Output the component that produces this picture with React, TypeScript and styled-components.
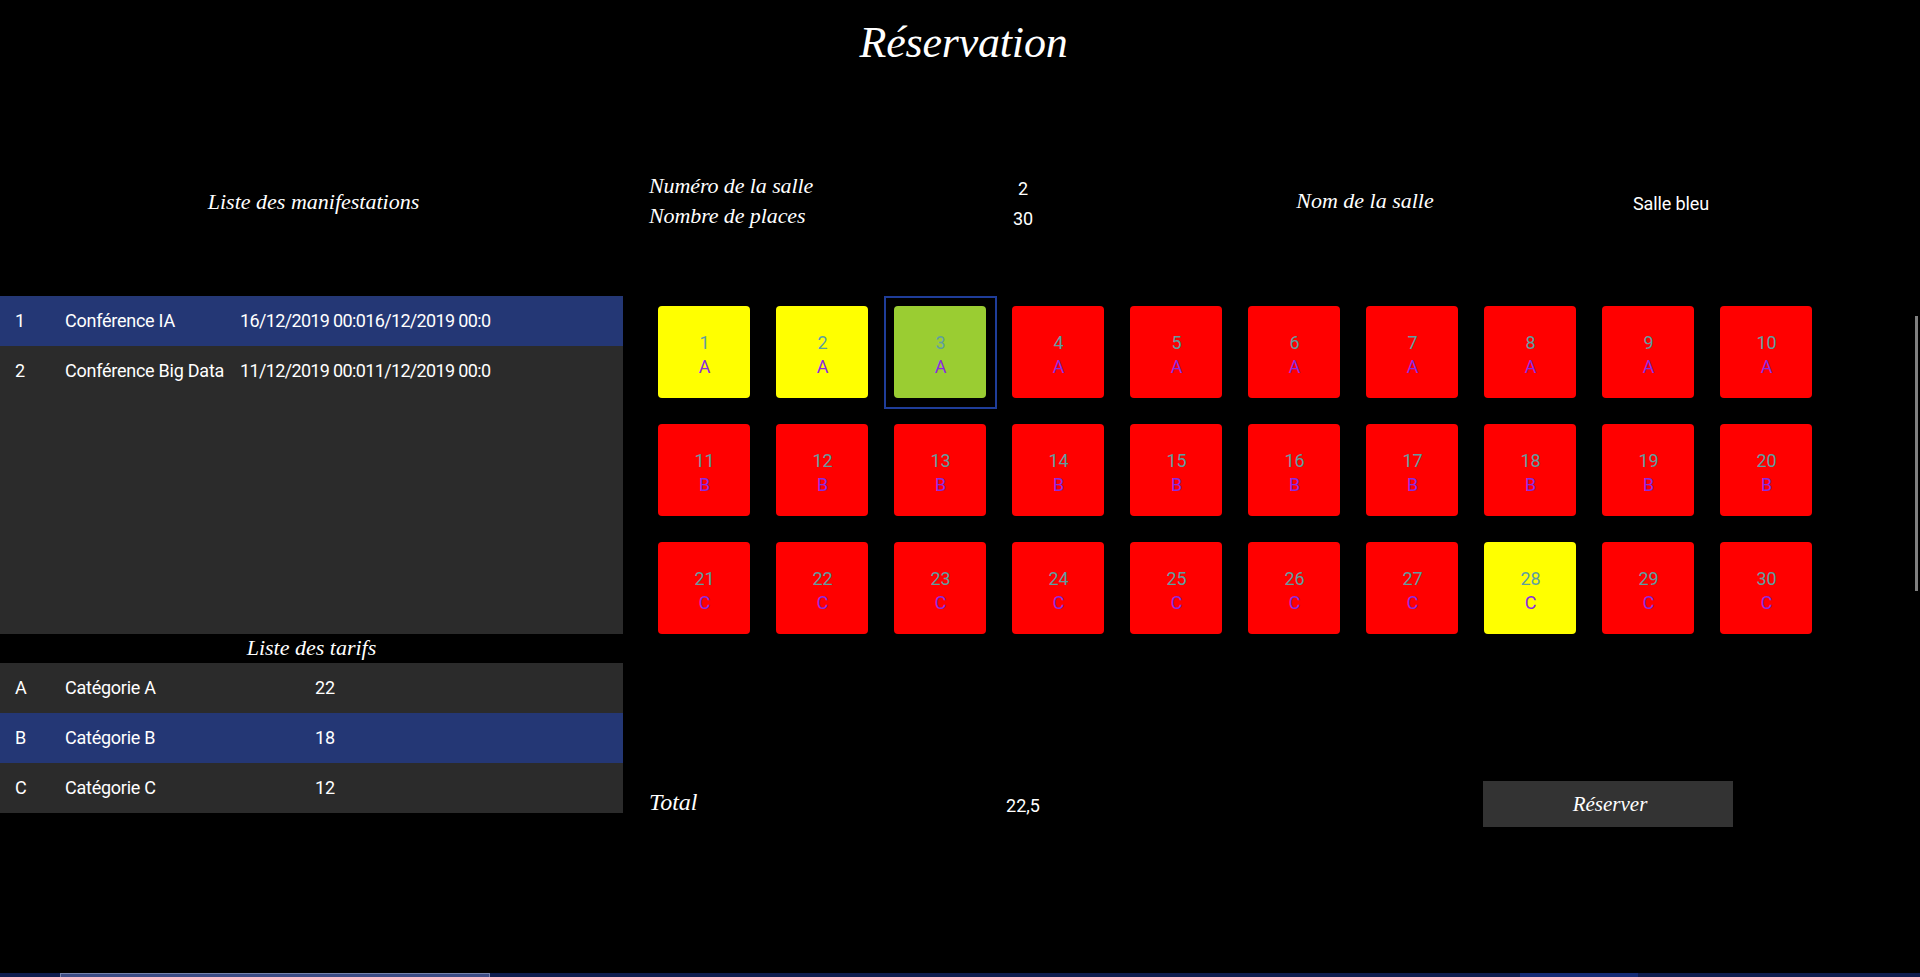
import { FC } from 'react';
import styled, { createGlobalStyle } from 'styled-components';

// ========== data ==========

const EVENTS = [
  { id: '1', name: 'Conférence IA', dates: '16/12/2019 00:016/12/2019 00:0', selected: true },
  { id: '2', name: 'Conférence Big Data', dates: '11/12/2019 00:011/12/2019 00:0', selected: false },
];

const PRICES = [
  { id: 'A', name: 'Catégorie A', price: '22', selected: false },
  { id: 'B', name: 'Catégorie B', price: '18', selected: true },
  { id: 'C', name: 'Catégorie C', price: '12', selected: false },
];

type SeatState = 'free' | 'taken' | 'current';

const seatState = (n: number): SeatState => {
  if (n === 3) return 'current';
  if (n === 1 || n === 2 || n === 28) return 'free';
  return 'taken';
};

const SEATS = Array.from({ length: 30 }, (_, i) => ({
  number: i + 1,
  category: i < 10 ? 'A' : i < 20 ? 'B' : 'C',
  state: seatState(i + 1),
}));

const SEAT_COLORS: Record<SeatState, string> = {
  free: '#ffff00',
  taken: '#ff0000',
  current: '#9acd32',
};

// ========== component ==========

const App: FC = () => (
  <>
    <GlobalStyle />
    <Page>
      <Title>Réservation</Title>
      <Columns>
        <LeftColumn>
          <ListHeading>Liste des manifestations</ListHeading>
          <EventList>
            {EVENTS.map((e) => (
              <Row key={e.id} $selected={e.selected} $second={175}>
                <span>{e.id}</span>
                <RowName>{e.name}</RowName>
                <RowDates>{e.dates}</RowDates>
              </Row>
            ))}
          </EventList>
          <SubHeading>Liste des tarifs</SubHeading>
          <div>
            {PRICES.map((p) => (
              <Row key={p.id} $selected={p.selected} $second={250}>
                <span>{p.id}</span>
                <RowName>{p.name}</RowName>
                <span>{p.price}</span>
              </Row>
            ))}
          </div>
        </LeftColumn>

        <RightColumn>
          <InfoGrid>
            <FancyLabel>Numéro de la salle</FancyLabel>
            <Value>2</Value>
            <RoomName>Nom de la salle</RoomName>
            <RoomValue>Salle bleu</RoomValue>
            <FancyLabel>Nombre de places</FancyLabel>
            <Value>30</Value>
          </InfoGrid>

          <SeatGrid>
            {SEATS.map((s) => (
              <Seat key={s.number} $state={s.state}>
                <SeatNumber>{s.number}</SeatNumber>
                <SeatCategory>{s.category}</SeatCategory>
              </Seat>
            ))}
          </SeatGrid>

          <TotalRow>
            <TotalLabel>Total</TotalLabel>
            <TotalValue>22,5</TotalValue>
            <BookButton type="button">Réserver</BookButton>
          </TotalRow>
        </RightColumn>
      </Columns>

      <VerticalScrollbar />
      <HorizontalScrollbar>
        <ThumbGap />
        <Thumb />
        <TrackA />
        <TrackB />
        <TrackC />
      </HorizontalScrollbar>
    </Page>
  </>
);

export default App;

// ========== styles ==========

const GlobalStyle = createGlobalStyle`
  html, body {
    margin: 0;
    background: #000;
  }
`;

const Page = styled.div`
  position: relative;
  height: 977px;
  overflow: hidden;
  background: #000;
  color: #fff;
  font-family: Roboto, 'Open Sans', sans-serif;
  font-size: 18px;
`;

const fancy = `
  font-family: 'Liberation Serif', serif;
  font-style: italic;
  font-weight: 400;
`;

const Title = styled.h1`
  ${fancy}
  margin: 0;
  height: 86px;
  line-height: 86px;
  text-align: center;
  font-size: 44px;
  padding-left: 7px;
  letter-spacing: -0.2px;
`;

const Columns = styled.div`
  display: grid;
  grid-template-columns: 623px 1fr;
`;

const LeftColumn = styled.div`
  display: flex;
  flex-direction: column;
`;

const ListHeading = styled.div`
  ${fancy}
  height: 190px;
  padding: 20px 0 0 4px;
  line-height: 192px;
  text-align: center;
  font-size: 22px;
`;

const EventList = styled.div`
  height: 338px;
  background: #2b2b2b;
`;

const SubHeading = styled.div`
  ${fancy}
  height: 29px;
  line-height: 27px;
  text-align: center;
  font-size: 22px;
`;

const Row = styled.div<{ $selected: boolean; $second: number }>`
  display: grid;
  grid-template-columns: 50px ${(p) => p.$second}px 1fr;
  align-items: center;
  box-sizing: border-box;
  height: 50px;
  padding: 0 0 2px 15px;
  background: ${(p) => (p.$selected ? '#243775' : '#2b2b2b')};
  white-space: nowrap;
`;

const RowName = styled.span`
  letter-spacing: -0.25px;
`;

const RowDates = styled.span`
  letter-spacing: -0.65px;
`;

const RightColumn = styled.div`
  display: flex;
  flex-direction: column;
  padding-left: 26px;
`;

const InfoGrid = styled.div`
  display: grid;
  grid-template-columns: 250px 248px 436px 176px;
  grid-template-rows: 30px 30px;
  margin-top: 85px;
`;

const FancyLabel = styled.div`
  ${fancy}
  line-height: 30px;
  font-size: 22px;
  letter-spacing: -0.1px;
`;

const Value = styled.div`
  line-height: 30px;
  padding-top: 3px;
  text-align: center;
`;

const RoomName = styled.div`
  ${fancy}
  grid-column: 3;
  grid-row: 1 / span 2;
  align-self: center;
  text-align: center;
  font-size: 22px;
`;

const RoomValue = styled.div`
  grid-column: 4;
  grid-row: 1 / span 2;
  align-self: center;
  padding-top: 4px;
  text-align: center;
  letter-spacing: -0.1px;
`;

const SeatGrid = styled.div`
  display: grid;
  grid-template-columns: repeat(10, 92px);
  grid-auto-rows: 92px;
  gap: 26px;
  margin: 75px 0 0 9px;
`;

const Seat = styled.div<{ $state: SeatState }>`
  position: relative;
  display: flex;
  flex-direction: column;
  align-items: center;
  justify-content: center;
  box-sizing: border-box;
  padding: 5px 0 0 1px;
  border-radius: 4px;
  background: ${(p) => SEAT_COLORS[p.$state]};
  font-size: 18px;
  line-height: 24px;

  ${(p) =>
    p.$state === 'current'
      ? `&::after {
    content: '';
    position: absolute;
    inset: -10px -11px -11px -10px;
    border: 2px solid #1f3d99;
  }`
      : ''}
`;

const SeatNumber = styled.span`
  color: #5f9ea0;
`;

const SeatCategory = styled.span`
  color: #8a2be2;
`;

const TotalRow = styled.div`
  display: grid;
  grid-template-columns: 250px 248px 336px 250px;
  align-items: center;
  height: 46px;
  margin-top: 147px;
`;

const TotalLabel = styled.div`
  ${fancy}
  padding-bottom: 4px;
  font-size: 24px;
`;

const TotalValue = styled.div`
  padding-top: 3px;
  text-align: center;
`;

const BookButton = styled.button`
  ${fancy}
  grid-column: 4;
  height: 46px;
  padding: 0 0 0 4px;
  border: 0;
  background: #333;
  color: #fff;
  font-size: 21px;
`;

const VerticalScrollbar = styled.div`
  position: absolute;
  top: 316px;
  right: 2px;
  width: 3px;
  height: 275px;
  background: #7f7f7f;
`;

const HorizontalScrollbar = styled.div`
  position: absolute;
  left: 0;
  right: 0;
  bottom: 0;
  display: flex;
  height: 4px;
`;

const ThumbGap = styled.div`
  width: 60px;
  background: #0f1d4f;
`;

const Thumb = styled.div`
  width: 430px;
  box-sizing: border-box;
  border: 1px solid #7683ad;
  border-bottom: 0;
  background: #3d4c85;
`;

const TrackA = styled.div`
  width: 1030px;
  background: #0f1d4f;
`;

const TrackB = styled.div`
  width: 118px;
  background: #152b75;
`;

const TrackC = styled.div`
  flex: 1;
  background: #0f1d4f;
`;
